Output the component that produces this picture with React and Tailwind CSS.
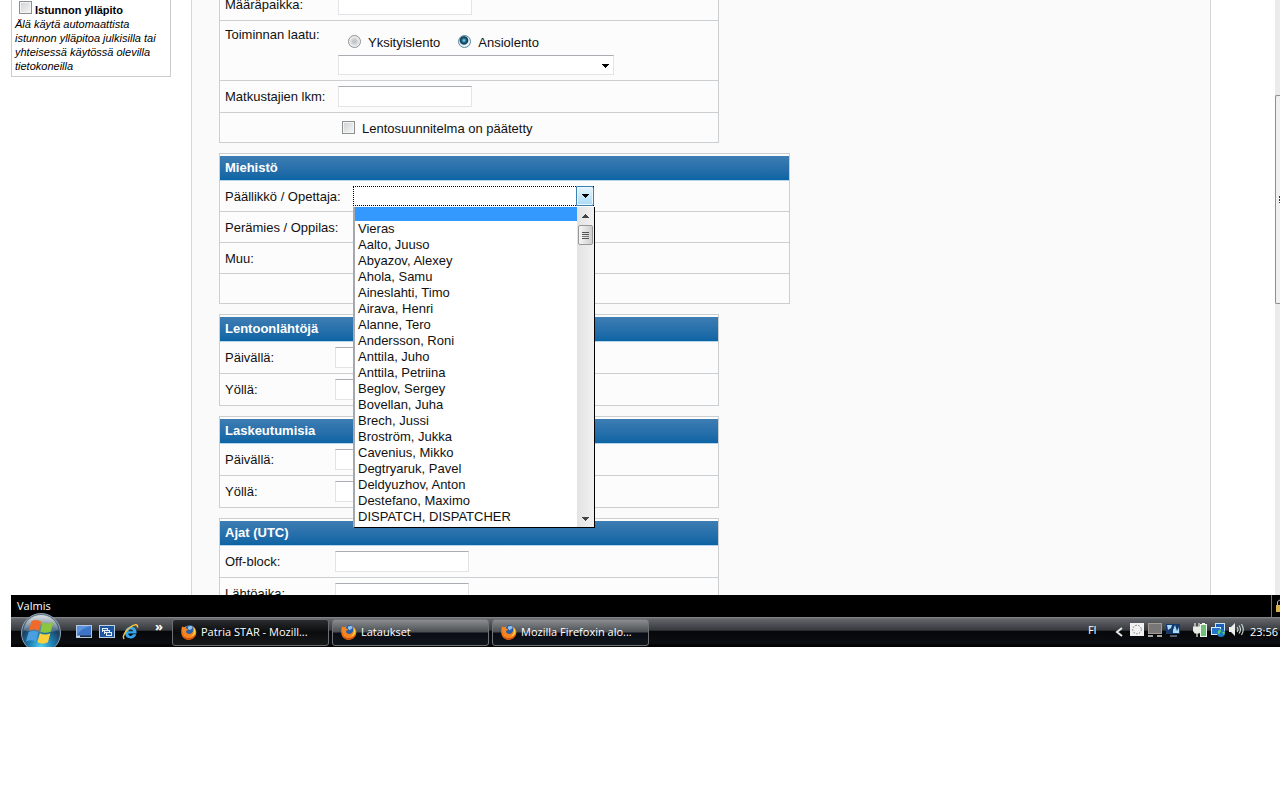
import React from "react";

const people = [
  "Vieras",
  "Aalto, Juuso",
  "Abyazov, Alexey",
  "Ahola, Samu",
  "Aineslahti, Timo",
  "Airava, Henri",
  "Alanne, Tero",
  "Andersson, Roni",
  "Anttila, Juho",
  "Anttila, Petriina",
  "Beglov, Sergey",
  "Bovellan, Juha",
  "Brech, Jussi",
  "Broström, Jukka",
  "Cavenius, Mikko",
  "Degtryaruk, Pavel",
  "Deldyuzhov, Anton",
  "Destefano, Maximo",
  "DISPATCH, DISPATCHER",
];

const fieldClass =
  "block border border-[#e3e3e8] border-t-[#abadb3] bg-white px-1 text-[13px] outline-none";

const boxClass =
  "block h-[13px] w-[13px] shrink-0 appearance-none border border-[#8e8f8f] bg-linear-to-br from-[#cfd2d6] to-[#f6f6f6] shadow-[inset_0_0_0_1px_#f4f4f4] checked:bg-[#3c7fb1]";

function Section({ title, children }) {
  return (
    <section className="mb-[10px] border border-[#cccfd1] bg-[#fcfcfc]">
      <h2 className="mt-[2px] h-[25px] border-b border-[#b5d5ea] bg-linear-to-b from-[#3d7db3] to-[#0c64a4] px-[5px] text-[13px] leading-[24px] font-bold text-white">
        {title}
      </h2>
      <div className="divide-y divide-[#cccfd1]">{children}</div>
    </section>
  );
}

function TextRow({ id, label, wide }) {
  return (
    <div className="flex h-8 items-center px-[5px] last:h-[31px]">
      <label htmlFor={id} className={wide ? "w-[113px]" : "w-[110px]"}>
        {label}
      </label>
      <input id={id} type="text" className={`${fieldClass} h-[21px] w-[134px]`} />
    </div>
  );
}

function Arrow({ up, className }) {
  return (
    <svg viewBox="0 0 7 4" width="7" height="4" className={className} shapeRendering="crispEdges" aria-hidden="true">
      <path d={up ? "M0 4h7L3.5 0z" : "M0 0h7L3.5 4z"} fill="currentColor" />
    </svg>
  );
}

function Radio({ id, label, checked }) {
  return (
    <div className="flex items-start">
      <input
        id={id}
        type="radio"
        name="laatu"
        defaultChecked={checked}
        className="mt-px block h-[13px] w-[13px] appearance-none rounded-full border border-[#8e8f8f] bg-[radial-gradient(circle,#c4c7ca_20%,#f4f4f4_70%)] checked:border-[#5586a3] checked:bg-[radial-gradient(circle_at_45%_40%,#8fdcf6_0%,#1d6283_25%,#0c3b54_42%,#e8f1f6_54%)]"
      />
      <label htmlFor={id} className="pt-px pl-[7px]">
        {label}
      </label>
    </div>
  );
}

function PilotList() {
  return (
    <div className="absolute top-full left-0 z-10 mt-px flex h-[321px] w-[242px] border-r border-b border-l-2 border-r-black border-b-black border-l-[#a5a8ac] bg-white text-[13px]">
      <ul role="listbox" aria-label="Päällikkö / Opettaja" className="flex-1">
        <li role="option" aria-selected="true" className="h-[14px] bg-[#3399ff]" />
        {people.map((name) => (
          <li key={name} role="option" aria-selected="false" className="h-4 px-[3px] leading-4 whitespace-nowrap">
            {name}
          </li>
        ))}
      </ul>
      <div className="flex w-[17px] flex-col items-center bg-linear-to-r from-[#e3e3e3] to-[#f1f1f1] text-[#444]">
        <Arrow up className="mt-[7px]" />
        <div className="mt-[7px] flex h-5 w-[15px] flex-col items-center justify-center gap-px rounded-[2px] border border-[#979797] bg-linear-to-r from-[#f5f5f5] to-[#cfcfd2]">
          <i className="h-px w-[7px] bg-[#555]" />
          <i className="h-px w-[7px] bg-[#555]" />
          <i className="h-px w-[7px] bg-[#777]" />
          <i className="h-px w-[7px] bg-[#555]" />
        </div>
        <Arrow className="mt-auto mb-[6px]" />
      </div>
    </div>
  );
}

function FlightForm() {
  return (
    <form className="w-[571px] text-[13px] leading-4 text-[#111]">
      <div className="w-[500px]">
        <section className="-mt-3 mb-[10px] divide-y divide-[#cccfd1] border border-[#cccfd1] bg-[#fcfcfc]">
          <TextRow id="maarapaikka" label="Määräpaikka:" wide />
          <div className="flex h-[60px] px-[5px]">
            <span className="w-[113px] pt-[6px]">Toiminnan laatu:</span>
            <div className="pt-[13px]">
              <div className="flex h-4 gap-[18px] pl-[10px]">
                <Radio id="yksityis" label="Yksityislento" />
                <Radio id="ansio" label="Ansiolento" checked />
              </div>
              <div className="relative mt-[5px] w-[276px]">
                <select aria-label="Toiminnan laatu" className={`${fieldClass} h-5 w-full appearance-none`}>
                  <option value=""></option>
                </select>
                <Arrow className="pointer-events-none absolute top-[9px] right-[5px] text-black" />
              </div>
            </div>
          </div>
          <TextRow id="matkustajat" label="Matkustajien lkm:" wide />
          <div className="flex h-[29px] items-center pl-[122px]">
            <input id="paatetty" type="checkbox" className={boxClass} />
            <label htmlFor="paatetty" className="pt-[3px] pl-[7px]">
              Lentosuunnitelma on päätetty
            </label>
          </div>
        </section>
      </div>

      <Section title="Miehistö">
        <div className="flex h-[31px] items-center px-[5px]">
          <label htmlFor="paallikko" className="w-[128px] pt-px">
            Päällikkö / Opettaja:
          </label>
          <div className="relative w-[241px]">
            <select
              id="paallikko"
              className="block h-5 w-full appearance-none border border-dotted border-black bg-white px-1 outline-none"
            >
              <option value=""></option>
              {people.map((name) => (
                <option key={name}>{name}</option>
              ))}
            </select>
            <span className="pointer-events-none absolute top-0 right-0 flex h-5 w-[18px] items-center justify-center rounded-r-[2px] border border-[#3c7fb1] bg-linear-to-b from-[#e6f5fd] to-[#a9dbf6] shadow-[inset_0_0_0_1px_#e8f6fe]">
              <Arrow className="text-black" />
            </span>
            <PilotList />
          </div>
        </div>
        <div className="flex h-[31px] items-center px-[5px] pt-px">Perämies / Oppilas:</div>
        <div className="flex h-[31px] items-center px-[5px] pt-px">Muu:</div>
        <div className="h-[29px]" />
      </Section>

      <div className="w-[500px]">
        <Section title="Lentoonlähtöjä">
          <TextRow id="lahto-paiva" label="Päivällä:" />
          <TextRow id="lahto-yo" label="Yöllä:" />
        </Section>
        <Section title="Laskeutumisia">
          <TextRow id="lasku-paiva" label="Päivällä:" />
          <TextRow id="lasku-yo" label="Yöllä:" />
        </Section>
        <Section title="Ajat (UTC)">
          <TextRow id="off-block" label="Off-block:" />
          <TextRow id="lahtoaika" label="Lähtöaika:" />
        </Section>
      </div>
    </form>
  );
}

function Firefox() {
  return (
    <svg viewBox="0 0 16 16" width="16" height="16" className="shrink-0" aria-hidden="true">
      <circle cx="8.6" cy="7" r="6" fill="#2d5fa8" />
      <path d="M7 2.5c2-1 4-.6 5 .6-1 .2-1.500 1-1 2-1.500 0-2 1-3 .8-.5-1-1.500-1.800-1-3.400z" fill="#8cc4ee" />
      <path
        d="M1.200 2.200c.6.700 1.200 1 2 1 .9-.7 1.800-1 2.800-1-.9.700-1.300 1.400-1.100 2.300.9.100 1.600.3 2.300.8-.6.900-1.800 1.200-2.200 2 .1 2 1.800 3 3.600 2.700 2.200-.3 3.700-1.900 3.600-4.400-.1-1.300-.5-2.400-1.200-3.400 2.700 1 4.600 3.600 4.300 6.800-.4 3.800-3.500 6.700-7.500 6.700-4.200 0-7.400-3.100-7.500-7.300 0-2.300.2-4.400.9-6.200z"
        fill="#f5861f"
      />
      <path d="M1.200 6.500c-.4 4.500 2.200 7.300 6.300 7.600 3.400.1 6.200-2 6.800-4.700.5 3.300-2.500 6-6 6.200C3.600 15.700 0 12 1.200 6.500z" fill="#d5500f" />
      <path d="M12.600 3.600c1.700 1.600 2.200 4.300 1.200 6.200-.9 1.800-2.500 2.700-4.200 2.900 2.700-1.500 4-4.500 3-9.100z" fill="#ffd84a" />
    </svg>
  );
}

function StartOrb() {
  return (
    <svg viewBox="0 0 42 34" width="42" height="34" className="block" aria-hidden="true">
      <defs>
        <radialGradient id="orb" cx="50%" cy="85%" r="75%">
          <stop offset="0" stopColor="#4fd0f2" />
          <stop offset=".4" stopColor="#1d7fb0" />
          <stop offset=".75" stopColor="#1c3f62" />
          <stop offset="1" stopColor="#5d7184" />
        </radialGradient>
        <linearGradient id="orbShine" x1="0" y1="0" x2="0" y2="1">
          <stop offset="0" stopColor="#fff" stopOpacity=".75" />
          <stop offset="1" stopColor="#fff" stopOpacity=".15" />
        </linearGradient>
      </defs>
      <circle cx="21" cy="20" r="19.500" fill="url(#orb)" stroke="#8da5b5" />
      <path d="M3.500 17C5 7.500 12.500 2 21 2s16 5.500 17.500 15C29 20.500 13 20.500 3.500 17z" fill="url(#orbShine)" />
      <g transform="translate(21 18.500) scale(1.2) translate(-20.500 -19)">
        <path d="M12.500 10.500c2.800-1.600 5.400-1.500 8.200.1l-2 7.800c-2.700-1.500-5.400-1.600-8.200 0z" fill="#f06a2a" />
        <path d="M21.900 11.200c2.900 1.500 5.700 1.600 8.900-.1l-2.100 7.800c-3 1.600-5.900 1.500-8.800 0z" fill="#8cc63f" />
        <path d="M10.100 19.700c2.800-1.500 5.500-1.400 8.200.1l-2 7.600c-2.700-1.500-5.400-1.600-8.300 0z" fill="#4a9fe3" />
        <path d="M19.500 20.400c2.900 1.600 5.700 1.600 8.800 0l-2 7.600c-3 1.600-5.800 1.500-8.800 0z" fill="#ffd03a" />
      </g>
    </svg>
  );
}

function QuickLaunch() {
  return (
    <div className="flex items-center gap-[7px]">
      <button type="button" aria-label="Työpöytä">
        <svg viewBox="0 0 16 14" width="16" height="14" aria-hidden="true">
          <rect x=".5" y=".5" width="15" height="12" fill="#3d74c6" stroke="#b4c6dd" />
          <path d="M1 1h14C10 2 4 5 1 10z" fill="#5c93dd" />
          <path d="M1 10.500h14V12H1z" fill="#1b2c48" />
          <path d="M1 10.500h3V12H1z" fill="#c9dcf2" />
        </svg>
      </button>
      <button type="button" aria-label="Vaihda ikkunaa">
        <svg viewBox="0 0 16 14" width="16" height="14" shapeRendering="crispEdges" aria-hidden="true">
          <rect x=".5" y=".5" width="15" height="12" fill="#1f559e" stroke="#b9cde4" />
          <path d="M3 3h6v4H3zM5 5h6v4H5zM7 7h6v4H7z" fill="#e6f0fa" />
          <path d="M4 4h4v1H4zM6 6h4v1H6zM8 8h4v2H8zM5 5h6v.01zM4 6h1v1H4zM6 8h1v1H6z" fill="#2e66ad" />
        </svg>
      </button>
      <button type="button" aria-label="Internet Explorer">
        <svg viewBox="0 0 17 16" width="17" height="16" aria-hidden="true">
          <path
            d="M14.300 10.300c-.7 2.500-2.900 4.200-5.600 4.200-3.400 0-5.700-2.300-5.700-5.700 0-3.600 2.500-6 5.800-6 3.700 0 6 2.600 5.800 6.600H6.300c.1 1.600 1 2.500 2.400 2.500 1 0 1.700-.5 2.100-1.600zM6.400 7.300h4.700c-.2-1.300-1-2.100-2.300-2.100-1.200 0-2.100.8-2.400 2.100z"
            fill="#35a7ef"
          />
          <path d="M2.200 14.800C-.4 13 4 5.500 9.500 2.300 13 .2 16 .1 15.600 3.500" fill="none" stroke="#f5c542" strokeWidth="1.500" />
        </svg>
      </button>
    </div>
  );
}

function TaskButton({ title, active }) {
  return (
    <button
      type="button"
      className={
        active
          ? "flex h-[27px] w-[157px] items-center gap-1 rounded-[3px] border border-[#6b6e72] bg-linear-to-b from-[#2a2c2e] via-[#0b0c0d] to-[#17191b] pl-2"
          : "flex h-[27px] w-[157px] items-center gap-1 rounded-[3px] border border-[#6f7377] bg-[linear-gradient(to_bottom,#8b8e90_0%,#4b4e52_48%,#090c14_52%,#10151c_100%)] pl-2"
      }
    >
      <Firefox />
      <span className="truncate">{title}</span>
    </button>
  );
}

function Tray() {
  return (
    <div className="flex items-center pr-[2px]">
      <span className="mb-1 w-[27px]">FI</span>
      <svg viewBox="0 0 8 10" width="8" height="10" aria-hidden="true">
        <path d="M7 1L2 5l5 4" fill="none" stroke="#e8e8e8" strokeWidth="2" />
      </svg>
      <svg viewBox="0 0 54 16" width="54" height="16" className="mb-1 ml-[6px]" aria-hidden="true">
        <rect x="1" y="1" width="14" height="13" fill="#f1f1f1" />
        <circle cx="8" cy="7.500" r="4.300" fill="none" stroke="#777" strokeDasharray="1.500 1.500" />
        <rect x="19.500" y="1.500" width="13" height="10" fill="#777" stroke="#a49c92" />
        <path d="M19 13h5v2h-5zM28 13h5v2h-5z" fill="#a7a7a7" />
        <path d="M37 2h14v10H37z" fill="#163a6c" />
        <path d="M38 3h5l-1 3-3 2zM44 8l2-5 2 6 2-4v6h-6z" fill="#a9dcfb" />
        <path d="M41 13h7v2h-7z" fill="#52606f" />
      </svg>
      <svg viewBox="0 0 52 16" width="52" height="16" className="mb-1 ml-[10px]" aria-hidden="true">
        <path d="M2 1v4M6 1v4M0 5h8v3l-2 3H2L0 8zM4 11v4" fill="#e9eee4" stroke="#e9eee4" strokeWidth="1.200" />
        <rect x="7.500" y="2.500" width="6" height="12" fill="#6fbf78" stroke="#eef6ee" />
        <path d="M9 1h3v1H9z" fill="#fff" />
        <rect x="22.500" y="1.500" width="9" height="8" fill="#1b5fb4" stroke="#c9e2f8" />
        <rect x="18.500" y="5.500" width="9" height="7" fill="#2474cc" stroke="#d9ecfb" />
        <circle cx="28" cy="11" r="4" fill="#1c79c0" />
        <path d="M25 9c2-2 3-1 3 0s-2 2-1 4c-2-1-3-2-2-4zM29 10l3 0-1 3z" fill="#5ccd62" />
        <path d="M36 5h2l4-4v13l-4-4h-2z" fill="#eee" />
        <path d="M44 5q2 2.500 0 5M46 3.500q3 4 0 8M48.500 2q3.500 5.500 0 11" fill="none" stroke="#d8e4dc" strokeWidth="1.100" />
      </svg>
      <span className="ml-[5px]">23:56</span>
    </div>
  );
}

export default function App() {
  return (
    <div className="min-h-screen bg-white pl-[11px] font-['Liberation_Sans',Arial,sans-serif]">
      <div className="flex h-[595px] overflow-hidden">
        <aside className="mr-5 h-[77px] w-40 border border-t-0 border-[#cccccc] px-[3px] text-[11px] leading-[14px] text-black">
          <div className="flex items-start gap-[3px] pl-1">
            <input id="istunto" type="checkbox" className={`${boxClass} mt-px`} />
            <label htmlFor="istunto" className="pt-[3px] font-bold">
              Istunnon ylläpito
            </label>
          </div>
          <p className="italic">Älä käytä automaattista istunnon ylläpitoa julkisilla tai yhteisessä käytössä olevilla tietokoneilla</p>
        </aside>
        <main className="flex-1 border-x border-[#d6d6d6] bg-[#fafafa] pl-[27px]">
          <FlightForm />
        </main>
        <div className="ml-16 w-[5px] bg-[#ebebeb] pt-[95px]">
          <div className="flex h-[209px] items-center justify-end rounded-l-[2px] border border-r-0 border-[#8f8f8f] bg-[#f0f0f0]">
            <div className="h-[7px] w-px bg-[repeating-linear-gradient(to_bottom,#333_0_2px,#fff_2px_3px)]" />
          </div>
        </div>
      </div>

      <div className="flex h-[22px] items-center justify-between bg-black pl-[6px] font-['Open_Sans','Noto_Sans',sans-serif] text-[11px] text-white">
        <span>Valmis</span>
        <span className="flex h-full w-[9px] items-center justify-end overflow-hidden border-l border-[#777]">
          <svg viewBox="0 0 4 14" width="4" height="14" aria-hidden="true">
            <path d="M0 6h4v7H0z" fill="#d9b14a" />
            <path d="M1.500 6V3q.5-1.500 2.500-2" fill="none" stroke="#b8b8b8" />
          </svg>
        </span>
      </div>

      <footer className="flex h-[30px] items-center justify-between bg-[linear-gradient(to_bottom,#8d9092_0%,#62666a_6%,#36393d_44%,#060709_48%,#0b0e12_85%,#000_100%)] font-['Open_Sans','Noto_Sans',sans-serif] text-[11px] text-white">
        <div className="flex items-center">
          <button type="button" aria-label="Käynnistä" className="-mt-1 ml-[9px]">
            <StartOrb />
          </button>
          <div className="ml-[14px]">
            <QuickLaunch />
          </div>
          <span className="mb-3 ml-4 w-[17px] text-[13px] leading-4 font-bold">»</span>
          <div className="flex gap-[3px]">
            <TaskButton title="Patria STAR - Mozill..." active />
            <TaskButton title="Lataukset" />
            <TaskButton title="Mozilla Firefoxin alo..." />
          </div>
        </div>
        <Tray />
      </footer>
    </div>
  );
}
